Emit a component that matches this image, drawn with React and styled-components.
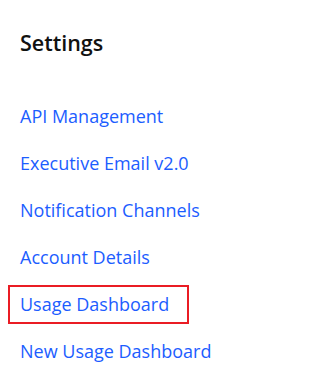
import styled, { createGlobalStyle } from "styled-components";

const GlobalStyle = createGlobalStyle`
  html, body {
    margin: 0;
    padding: 0;
    background: #ffffff;
  }
  body {
    font-family: "Open Sans", "Noto Sans", sans-serif;
  }
`;

const Panel = styled.aside`
  width: 316px;
  height: 374px;
  box-sizing: border-box;
  padding: 28px 0 0 8px;
  background: #ffffff;
`;

const Title = styled.h2`
  margin: 0 0 0 12px;
  font-size: 21.5px;
  font-weight: 600;
  line-height: 29px;
  color: #111111;
`;

const Menu = styled.nav`
  display: flex;
  flex-direction: column;
  align-items: flex-start;
  gap: 8px;
  margin-top: 40px;
`;

const MenuLink = styled.a`
  display: block;
  box-sizing: border-box;
  width: 181px;
  height: 39px;
  padding: 5px 10px;
  border: 2px solid ${(p) => (p.$highlight ? "#ea1c24" : "transparent")};
  font-size: 18px;
  line-height: 25px;
  color: #1c5dff;
  text-decoration: none;
  white-space: nowrap;
`;

const items = [
  "API Management",
  "Executive Email v2.0",
  "Notification Channels",
  "Account Details",
  "Usage Dashboard",
  "New Usage Dashboard",
];

export default function App() {
  return (
    <>
      <GlobalStyle />
      <Panel>
        <Title>Settings</Title>
        <Menu>
          {items.map((label) => (
            <MenuLink
              key={label}
              href="#"
              $highlight={label === "Usage Dashboard"}
            >
              {label}
            </MenuLink>
          ))}
        </Menu>
      </Panel>
    </>
  );
}
